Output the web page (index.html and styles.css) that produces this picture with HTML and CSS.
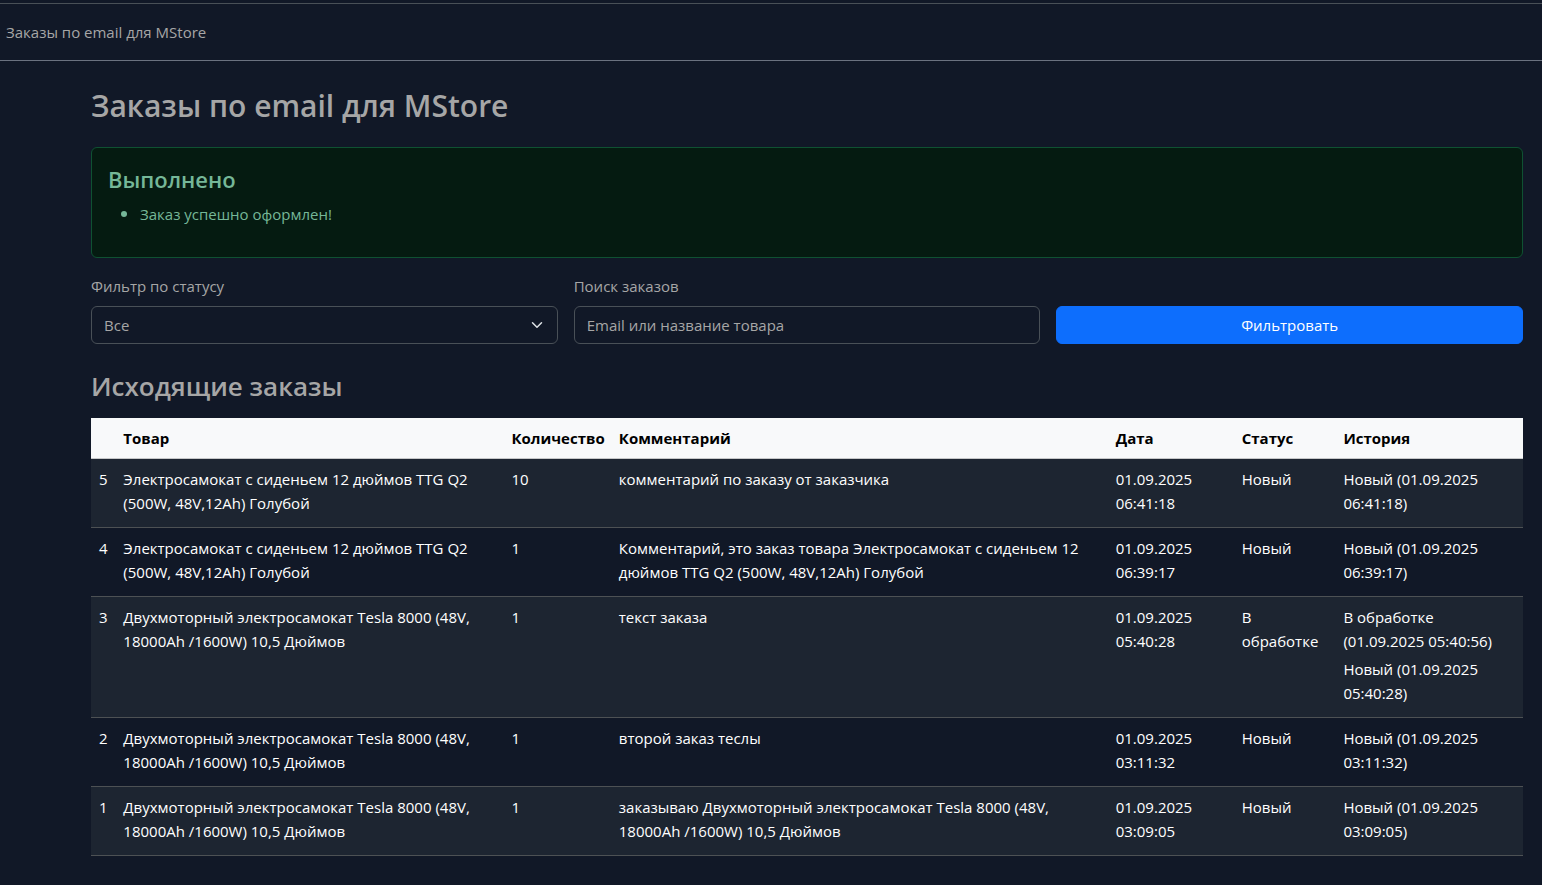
FILE: index.html
```html
<!DOCTYPE html>
<html lang="ru">
<head>
<meta charset="utf-8">
<meta name="viewport" content="width=device-width, initial-scale=1">
<title>Заказы по email для MStore</title>
<link rel="stylesheet" href="styles.css">
</head>
<body>
<header class="topbar">Заказы по email для MStore</header>
<main class="content">
  <h1 class="page-title">Заказы по email для MStore</h1>

  <section class="alert" role="alert">
    <h4 class="alert-title">Выполнено</h4>
    <ul class="alert-list">
      <li>Заказ успешно оформлен!</li>
    </ul>
  </section>

  <form class="filters">
    <div class="field">
      <label class="label" for="status">Фильтр по статусу</label>
      <div class="select-wrap">
        <select class="control select" id="status">
          <option>Все</option>
          <option>Новый</option>
          <option>В обработке</option>
        </select>
        <svg class="chevron" viewBox="0 0 16 16" aria-hidden="true"><path d="m2 5 6 6 6-6" fill="none" stroke="#dee2e6" stroke-width="2" stroke-linecap="round" stroke-linejoin="round"/></svg>
      </div>
    </div>
    <div class="field">
      <label class="label" for="search">Поиск заказов</label>
      <input class="control" id="search" type="text" placeholder="Email или название товара">
    </div>
    <button class="button" type="submit">Фильтровать</button>
  </form>

  <h2 class="section-title">Исходящие заказы</h2>

  <table class="orders">
    <colgroup>
      <col class="col-id"><col class="col-product"><col class="col-count"><col class="col-comment"><col class="col-date"><col class="col-status"><col class="col-history">
    </colgroup>
    <thead>
      <tr><th></th><th>Товар</th><th>Количество</th><th>Комментарий</th><th>Дата</th><th>Статус</th><th>История</th></tr>
    </thead>
    <tbody>
      <tr>
        <td>5</td>
        <td>Электросамокат с сиденьем 12 дюймов TTG Q2 (500W, 48V,12Ah) Голубой</td>
        <td>10</td>
        <td>комментарий по заказу от заказчика</td>
        <td>01.09.2025 06:41:18</td>
        <td>Новый</td>
        <td><ul class="history"><li>Новый (01.09.2025 06:41:18)</li></ul></td>
      </tr>
      <tr>
        <td>4</td>
        <td>Электросамокат с сиденьем 12 дюймов TTG Q2 (500W, 48V,12Ah) Голубой</td>
        <td>1</td>
        <td>Комментарий, это заказ товара Электросамокат с сиденьем 12 дюймов TTG Q2 (500W, 48V,12Ah) Голубой</td>
        <td>01.09.2025 06:39:17</td>
        <td>Новый</td>
        <td><ul class="history"><li>Новый (01.09.2025 06:39:17)</li></ul></td>
      </tr>
      <tr>
        <td>3</td>
        <td>Двухмоторный электросамокат Tesla 8000 (48V, 18000Ah /1600W) 10,5 Дюймов</td>
        <td>1</td>
        <td>текст заказа</td>
        <td>01.09.2025 05:40:28</td>
        <td>В обработке</td>
        <td><ul class="history"><li>В обработке (01.09.2025 05:40:56)</li><li>Новый (01.09.2025 05:40:28)</li></ul></td>
      </tr>
      <tr>
        <td>2</td>
        <td>Двухмоторный электросамокат Tesla 8000 (48V, 18000Ah /1600W) 10,5 Дюймов</td>
        <td>1</td>
        <td>второй заказ теслы</td>
        <td>01.09.2025 03:11:32</td>
        <td>Новый</td>
        <td><ul class="history"><li>Новый (01.09.2025 03:11:32)</li></ul></td>
      </tr>
      <tr>
        <td>1</td>
        <td>Двухмоторный электросамокат Tesla 8000 (48V, 18000Ah /1600W) 10,5 Дюймов</td>
        <td>1</td>
        <td>заказываю Двухмоторный электросамокат Tesla 8000 (48V, 18000Ah /1600W) 10,5 Дюймов</td>
        <td>01.09.2025 03:09:05</td>
        <td>Новый</td>
        <td><ul class="history"><li>Новый (01.09.2025 03:09:05)</li></ul></td>
      </tr>
    </tbody>
  </table>
</main>
</body>
</html>
```

FILE: styles.css
```css
*, *::before, *::after { box-sizing: border-box; }

body {
  margin: 0;
  padding-top: 3px;
  background: #111827;
  color: #a6a6a6;
  font: 15px/24px "Open Sans", "Noto Sans", sans-serif;
}

.topbar {
  padding: 16px 6px;
  border-top: 1px solid #495057;
  border-bottom: 1px solid #6b7280;
}

.content { padding: 24px 19px 24px 91px; }

.page-title, .section-title, .alert-title { margin: 0; font-weight: 600; }
.page-title { margin-bottom: 20px; font-size: 30px; line-height: 42px; }
.section-title { margin-bottom: 14px; font-size: 26px; line-height: 36px; }

.alert {
  margin-bottom: 16px;
  padding: 16px;
  border: 1px solid #0f5132;
  border-radius: 6px;
  background: #051b11;
  color: #75b798;
}
.alert-title { margin-bottom: 6px; font-size: 22px; line-height: 31px; }
.alert-list { margin: 0 0 16px; padding-left: 32px; }
.alert-list li::marker { font-size: 18px; }
.alert-list li { height: 24px; }

.filters {
  display: grid;
  grid-template-columns: repeat(3, 1fr);
  gap: 16px;
  align-items: end;
  margin-bottom: 24px;
}
.label { display: block; margin-bottom: 8px; }
.control {
  display: block;
  width: 100%;
  height: 38px;
  padding: 6px 12px;
  border: 1px solid #495057;
  border-radius: 6px;
  background: #111827;
  color: inherit;
  font: inherit;
}
.control::placeholder { color: #a6a6a6; opacity: 1; }
.select { appearance: none; padding-right: 36px; }
.select-wrap { position: relative; }
.chevron {
  position: absolute;
  top: 13px;
  right: 15px;
  width: 12px;
  height: 12px;
  pointer-events: none;
}
.button {
  height: 38px;
  padding: 6px 12px;
  border: 1px solid #0d6efd;
  border-radius: 6px;
  background: #0d6efd;
  color: #fff;
  font: inherit;
}

.orders {
  width: 100%;
  border-collapse: separate;
  border-spacing: 0;
  table-layout: fixed;
  color: #fff;
}
.col-id { width: 1.7%; }
.col-product { width: 27.1%; }
.col-count { width: 7.5%; }
.col-comment { width: 34.7%; }
.col-date { width: 8.8%; }
.col-status { width: 7.1%; }
.col-history { width: 13.1%; }

.orders th, .orders td {
  padding: 8px;
  border-bottom: 1px solid #4d5154;
  text-align: left;
  vertical-align: top;
}
.orders th {
  border-color: #c6c7c8;
  background: #f8f9fa;
  color: #000;
  font-weight: 700;
}
.orders tbody tr:nth-child(odd) { background: #1d2531; }

.history { margin: 0; padding: 0; list-style: none; }
.history li { margin-bottom: 4px; }
```
